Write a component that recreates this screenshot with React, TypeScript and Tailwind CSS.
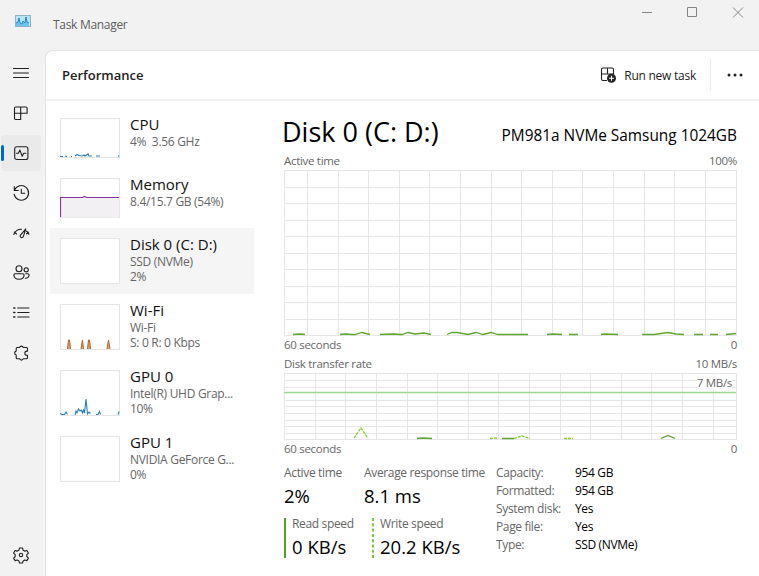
import { ReactNode } from 'react';

const navIcons: { id: string; icon: ReactNode }[] = [
  { id: 'menu', icon: <path d="M2.5 5.5h15M2.5 10h15M2.5 14.5h15" /> },
  {
    id: 'processes',
    icon: <path d="M4.7 4h10.200a1.200 1.200 0 0 1 1.200 1.200v5.100H3.500V5.200A1.200 1.200 0 0 1 4.700 4zM3.500 10.300v5a1.200 1.200 0 0 0 1.200 1.200h5V4" />,
  },
  {
    id: 'performance',
    icon: (
      <>
        <rect x="3.7" y="3.7" width="13.2" height="12.8" rx="2" />
        <path d="M5.5 10.3h1.9l1.5-3.2 2.3 6.2 1.5-3h2.2" />
      </>
    ),
  },
  {
    id: 'history',
    icon: <path d="M3.3 3.500v4h4M3.500 7.200a7.300 7.300 0 1 1-.4 4M10.300 6.200v4.100h3.500" />,
  },
  {
    id: 'startup',
    icon: (
      <>
        <path d="M2.8 11.500A8 8 0 0 1 10.500 6.300M15.500 8a8 8 0 0 1 2.400 3.300M3.300 9l2.300 2M17.500 9.300l-2 1.500" />
        <path d="M14.800 5.800l-2.600 8a1.700 1.700 0 0 1-3.100-1.200z" />
      </>
    ),
  },
  {
    id: 'users',
    icon: (
      <>
        <circle cx="8" cy="5.8" r="3" />
        <circle cx="15.2" cy="6.8" r="2.1" />
        <path d="M4.2 10.800h7.600a1.300 1.300 0 0 1 1.300 1.300c0 2.400-2 4.200-5.100 4.200s-5.100-1.800-5.100-4.200a1.300 1.300 0 0 1 1.300-1.300zM14.800 10.800h2a1.300 1.300 0 0 1 1.300 1.300c0 2-1.500 3.200-3.800 3.100" />
      </>
    ),
  },
  {
    id: 'details',
    icon: (
      <>
        <path d="M6.7 5h11.300M6.700 9.500h11.300M6.700 14h11.300" />
        <path strokeWidth="1.6" d="M2.8 5h1M2.800 9.500h1M2.800 14h1" />
      </>
    ),
  },
  {
    id: 'services',
    icon: (
      <path d="M6.2 4.500h2.300a2 2 0 0 1 3.800 0h3.200a1 1 0 0 1 1 1v2.600h-.6a2 2 0 0 0 0 4.100h.6v2.500a1 1 0 0 1-1 1h-3.200a2 2 0 0 1-3.800 0H6.200a1 1 0 0 1-1-1V12a2 2 0 0 1 0-3.900V5.500a1 1 0 0 1 1-1z" />
    ),
  },
];

function NavIcon({ children }: { children: ReactNode }) {
  return (
    <svg width="20" height="20" viewBox="0 0 20 20" fill="none" stroke="#1f1f1f" strokeWidth="1.1" strokeLinecap="round" strokeLinejoin="round">
      {children}
    </svg>
  );
}

interface Resource {
  name: string;
  lines: string[];
  thumb?: ReactNode;
}

const resources: Resource[] = [
  {
    name: 'CPU',
    lines: ['4%  3.56 GHz'],
    thumb: (
      <path d="M0 38.5h3M5 38l2 .5M11 38.5h1M15 38l2-1.5 2 1 3 .5 2-1 1 1 3-2 1 2h3M36 38h4M58 38.5l1-1" fill="none" stroke="#2a7fba" strokeWidth="1.2" />
    ),
  },
  {
    name: 'Memory',
    lines: ['8.4/15.7 GB (54%)'],
    thumb: (
      <>
        <path d="M1 19.5h58v20H1z" fill="#f3f0f4" />
        <path d="M.5 39V19.5h22l2-1 2 1H59" fill="none" stroke="#8b2fa8" strokeWidth="1.2" />
      </>
    ),
  },
  { name: 'Disk 0 (C: D:)', lines: ['SSD (NVMe)', '2%'] },
  {
    name: 'Wi-Fi',
    lines: ['Wi-Fi', 'S: 0 R: 0 Kbps'],
    thumb: (
      <path d="M7.5 45l1-9h1l1 9M21 45l1.5-9 1 9M27.5 45l1-9h1l1 9M47 45l1.5-9 1.5 9" fill="#d9a679" stroke="#b0622a" strokeWidth="1" />
    ),
  },
  {
    name: 'GPU 0',
    lines: ['Intel(R) UHD Grap...', '10%'],
    thumb: (
      <path
        d="M0 43.5l2 1h2.500l1.500-2.500 1.500 2.500M15 45l1-4 1 2 1.500-4 1.500 2 1.500-1 1 3 1-3 1 3 1.500-14 1.500 15 1.500-2 1.500 1.500M36 44.500h2l1.500-3 1 3M58 44.500l1-3"
        fill="none"
        stroke="#2a7fba"
        strokeWidth="1.1"
      />
    ),
  },
  { name: 'GPU 1', lines: ['NVIDIA GeForce G...', '0%'] },
];

function ResourceRow({ resource, selected }: { resource: Resource; selected: boolean }) {
  const tall = resource.lines.length > 1;
  return (
    <div className={`flex w-[204px] gap-[10px] p-[10px] ${tall ? 'h-[66px]' : 'h-[60px]'} ${selected ? 'bg-[#f5f5f5]' : ''}`}>
      <div className={`w-[60px] shrink-0 border border-[#e5e5e5] bg-white ${tall ? 'h-[46px]' : 'h-[40px]'}`}>
        <svg className="-m-px block" width="60" height={tall ? 46 : 40}>
          {resource.thumb}
        </svg>
      </div>
      <div className="-mt-1 whitespace-pre">
        <div className="text-[15px] leading-[20px] text-[#111]">{resource.name}</div>
        {resource.lines.map((line) => (
          <div key={line} className="text-[12px] leading-[15px] tracking-[-0.3px] text-[#666]">
            {line}
          </div>
        ))}
      </div>
    </div>
  );
}

interface ChartProps {
  height: number;
  offset: number;
  skipRow?: number;
  children: ReactNode;
}

function Chart({ height, offset, skipRow, children }: ChartProps) {
  const cols = Array.from({ length: 15 }, (_, i) => Math.floor(offset + i * 30.6) + 0.5).filter((x) => x < 450);
  const rows = [1, 2, 3, 4, 5, 6, 7, 8, 9].filter((row) => row !== skipRow);
  return (
    <svg className="block" width="453" height={height}>
      <g stroke="#e6e6e6" fill="none">
        <rect x="0.5" y="0.5" width="452" height={height - 1} />
        {cols.map((x) => (
          <path key={x} d={`M${x} 0V${height}`} />
        ))}
        {rows.map((row) => (
          <path key={row} d={`M0 ${Math.ceil((row * (height - 1)) / 10) + 0.5}H453`} />
        ))}
      </g>
      {children}
    </svg>
  );
}

function ChartLabels({ left, right, className }: { left: string; right: string; className: string }) {
  return (
    <div className={`flex justify-between text-[11.5px] tracking-[-0.3px] ${className}`}>
      <span>{left}</span>
      <span>{right}</span>
    </div>
  );
}

const details = [
  ['Capacity:', '954 GB'],
  ['Formatted:', '954 GB'],
  ['System disk:', 'Yes'],
  ['Page file:', 'Yes'],
  ['Type:', 'SSD (NVMe)'],
];

export default function App() {
  return (
    <div className="flex h-[576px] w-[759px] flex-col overflow-hidden bg-[#f2f2f2] font-['Open_Sans','Noto_Sans',sans-serif]">
      {/* Title bar */}
      <header className="flex h-[50px] shrink-0 justify-between">
        <div className="flex h-[42px] items-center pt-[6px] pl-[15px]">
          <svg className="-mt-[6px]" width="16" height="12">
            <rect x="0.5" y="0.5" width="15" height="11" fill="#b9e4fb" stroke="#8db4ca" />
            <path d="M1 11V8l2-1 1-4 1 5 2 1 1-3 2 2 1-6 1 5 2 1v3z" fill="#6cc3f3" />
            <path d="M1 8l2-1 1-4 1 5 2 1 1-3 2 2 1-6 1 5 2 1" fill="none" stroke="#238bcc" />
          </svg>
          <span className="ml-[22px] pt-px text-[12px] tracking-[-0.3px] text-[#5e5e5e]">Task Manager</span>
        </div>
        <svg width="120" height="24" fill="none" stroke="#858585">
          <path d="M3 12.500h10M48.500 7.500h9v9h-9zM94 7.500l10 10M104 7.500l-10 10" />
        </svg>
      </header>

      <div className="flex min-h-0 flex-1">
        {/* Navigation rail */}
        <nav className="flex w-[45px] shrink-0 flex-col items-start pt-[3px] pl-px">
          {navIcons.map(({ id, icon }) => (
            <div key={id} className="flex h-10 w-10 items-center">
              <div className={`flex h-9 w-10 items-center rounded ${id === 'performance' ? 'bg-[#eaeaea]' : ''}`}>
                <span className={`h-4 w-[3px] rounded-full ${id === 'performance' ? 'bg-[#0067c0]' : ''}`} />
                <span className="ml-[7px]">
                  <NavIcon>{icon}</NavIcon>
                </span>
              </div>
            </div>
          ))}
          <div className="mt-auto mb-[11px] ml-[10px]">
            <NavIcon>
              <circle cx="10" cy="10" r="1.7" />
              <path d="M8.500 3h3l.6 2.200 1.600.9 2.200-.6 1.500 2.600-1.600 1.600v1.800l1.600 1.600-1.500 2.500-2.200-.6-1.600.9-.6 2.100h-3l-.6-2.100-1.600-.9-2.200.6-1.500-2.500 1.600-1.600V9.700L2.600 8.100l1.500-2.600 2.200.6 1.600-.9z" />
            </NavIcon>
          </div>
        </nav>

        <main className="flex min-w-0 flex-1 flex-col rounded-tl-lg border-t border-l border-[#e3e3e3] bg-white">
          <div className="flex h-[50px] shrink-0 items-center border-b-2 border-[#f0f0f0] pr-4 pl-4">
            <h1 className="pt-px text-[13px] font-semibold text-[#222]">Performance</h1>
            <div className="ml-auto flex items-center">
              <svg width="17" height="17" fill="none" stroke="#222" strokeWidth="1.1">
                <path d="M7 13.500H3a1.500 1.500 0 0 1-1.500-1.500V2.500A1.500 1.500 0 0 1 3 1h9a1.500 1.500 0 0 1 1.500 1.500V7H1.500M7.500 1v6" />
                <circle cx="11.500" cy="11.300" r="4.500" fill="#222" stroke="none" />
                <path d="M9 11.300h5M11.500 8.800v5" stroke="#fff" />
              </svg>
              <span className="ml-[7px] pt-px text-[12px] tracking-[-0.25px] text-[#222]">Run new task</span>
              <div className="ml-[14px] h-8 w-px bg-[#ececec]" />
              <svg className="ml-4" width="16" height="4" fill="#222">
                <circle cx="2" cy="2" r="1.500" />
                <circle cx="8" cy="2" r="1.500" />
                <circle cx="14" cy="2" r="1.500" />
              </svg>
            </div>
          </div>

          <div className="flex min-h-0 flex-1">
            {/* Resource list */}
            <div className="ml-1 w-[204px] shrink-0 pt-[7px]">
              {resources.map((resource) => (
                <ResourceRow key={resource.name} resource={resource} selected={resource.name === 'Disk 0 (C: D:)'} />
              ))}
            </div>

            {/* Disk details */}
            <section className="ml-[30px] w-[453px] pt-[11px] text-[12px] leading-[18px] tracking-[-0.35px] text-[#666]">
              <div className="flex h-[40px] items-start justify-between whitespace-nowrap tracking-normal text-black">
                <h2 className="-ml-[2px] text-[27px] leading-[40px]">Disk 0 (C: D:)</h2>
                <span className="pt-[9px] text-[15.4px] leading-[30px]">PM981a NVMe Samsung 1024GB</span>
              </div>
              <ChartLabels left="Active time" right="100%" className="h-[18px]" />
              <Chart height={166} offset={23.5}>
                <path
                  d="M9 164.500l7-.5 5 .5M56 164.500l6-.5 6 .5h3l7-2 8 2M96 164.500l14-.5 6 .5h2l6-2 7 1.500 9-1 7 1.500M163 164.500l5-2h5l11 2 8-2 7 2 8-2 7 2h30M263 164.500l6-.5 9 .5M285 164.500h9M317 164.500l4-.5 13 .5M358 164.500h12l14-2 8 1.500 8 .5M410 164.500h9M426 164.500h8M442 164.500l10-1"
                  fill="none"
                  stroke="#5ea62d"
                  strokeWidth="1.3"
                />
              </Chart>
              <ChartLabels left="60 seconds" right="0" className="h-[19px]" />
              <ChartLabels left="Disk transfer rate" right="10 MB/s" className="h-[18px]" />
              <div className="relative">
                <Chart height={67} offset={31.3} skipRow={3}>
                  <path d="M0 19.500h452" stroke="#9ad694" strokeWidth="1.4" />
                  <path d="M70 65l7-10 7 10M206 65.500l7-.5M230 65.500l8-2.500 8 2.500M280 65.500h9" fill="none" stroke="#86cc34" strokeWidth="1.3" strokeDasharray="3 1" />
                  <path d="M133 65.500l5-.5 10 .5M218 65.500h12M377 65.500l7-3 7 3" fill="none" stroke="#5ea62d" strokeWidth="1.3" />
                </Chart>
                <span className="absolute top-0.5 right-[5px] bg-white text-[11.5px] leading-[15px] tracking-[-0.3px]">7 MB/s</span>
              </div>
              <ChartLabels left="60 seconds" right="0" className="h-[24px]" />

              <div className="flex whitespace-nowrap">
                <div className="w-[212px]">
                  <div className="flex h-[54px]">
                    <div className="w-20">
                      <div>Active time</div>
                      <div className="text-[18.5px] leading-[28px] tracking-normal text-black">2%</div>
                    </div>
                    <div>
                      <div>Average response time</div>
                      <div className="text-[18.5px] leading-[28px] tracking-normal text-black">8.1 ms</div>
                    </div>
                  </div>
                  <div className="flex h-[42px]">
                    <div className="h-10 w-[88px] border-l-2 border-[#4ea21f] pl-[6px]">
                      <div className="-mt-[3px]">Read speed</div>
                      <div className="text-[18.5px] leading-[28px] tracking-normal text-black">0 KB/s</div>
                    </div>
                    <svg className="shrink-0" width="2" height="40">
                      <path d="M1 0v40" stroke="#7ac943" strokeWidth="2" strokeDasharray="3 2.3" />
                    </svg>
                    <div className="pl-[6px]">
                      <div className="-mt-[3px]">Write speed</div>
                      <div className="text-[18.5px] leading-[28px] tracking-normal text-black">20.2 KB/s</div>
                    </div>
                  </div>
                </div>
                <dl className="grid auto-rows-[18px] grid-cols-[79px_1fr]">
                  {details.map(([label, value]) => (
                    <div key={label} className="contents">
                      <dt>{label}</dt>
                      <dd className="text-black">{value}</dd>
                    </div>
                  ))}
                </dl>
              </div>
            </section>
          </div>
        </main>
      </div>
    </div>
  );
}
